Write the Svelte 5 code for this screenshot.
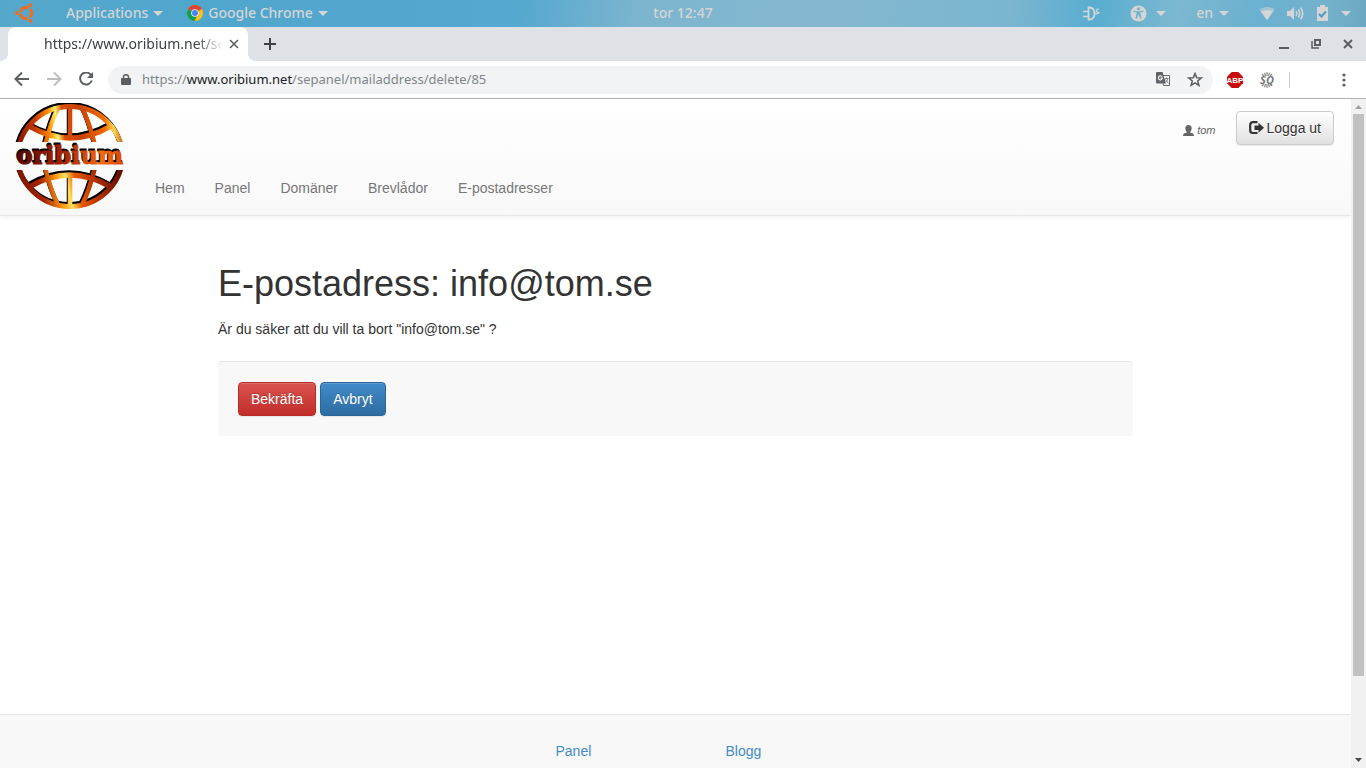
<script lang="ts">
  interface NavLink {
    label: string;
    href: string;
  }

  const address = 'info@tom.se';
  const user = 'tom';

  const navLinks: NavLink[] = [
    { label: 'Hem', href: '#hem' },
    { label: 'Panel', href: '#panel' },
    { label: 'Domäner', href: '#domaner' },
    { label: 'Brevlådor', href: '#brevlador' },
    { label: 'E-postadresser', href: '#e-postadresser' },
  ];

  const footerLinks: NavLink[] = [
    { label: 'Panel', href: '#panel' },
    { label: 'Blogg', href: '#blogg' },
  ];
</script>

{#snippet caret()}
  <svg class="caret" width="10" height="5" viewBox="0 0 10 5" aria-hidden="true"><path d="M0 0h10L5 5z" fill="currentColor" /></svg>
{/snippet}

<!-- Upper half of the globe; the lower half reuses it mirrored. -->
{#snippet globeHalf()}
  <path d="M2.500 53.500A52.500 51 0 0 1 107.500 53.500" stroke-width="5" />
  <path d="M14 22Q55 46 96 22" stroke-width="5.500" />
  <path d="M55 3V34" stroke-width="4.500" />
  <path d="M43 4Q35 20 30 42M67 4Q75 20 80 42" stroke-width="4.500" />
{/snippet}

<div class="desktop">
  <header class="topbar">
    <div class="topbar-left">
      <button class="sys ubuntu" aria-label="Ubuntu">
        <svg width="20" height="20" viewBox="0 0 20 20">
          <circle cx="11" cy="10" r="5.600" fill="none" stroke="#f96a16" stroke-width="3" stroke-dasharray="9.700 2.030" stroke-dashoffset="4.850" />
          <g fill="#f96a16">
            <circle cx="2" cy="10" r="1.900" />
            <circle cx="15.500" cy="2.200" r="1.900" />
            <circle cx="15.500" cy="17.800" r="1.900" />
          </g>
        </svg>
      </button>
      <button class="sys">Applications {@render caret()}</button>
      <button class="sys chrome">
        <svg width="16" height="16" viewBox="0 0 16 16" aria-hidden="true">
          <circle cx="8" cy="8" r="8" fill="#fbc116" />
          <path d="M8 8L1.070 4A8 8 0 0 1 14.930 4z" fill="#db4437" />
          <path d="M8 8L1.070 4A8 8 0 0 0 7.500 16L11 9z" fill="#0f9d58" />
          <circle cx="8" cy="8" r="3.800" fill="#f1f1f1" />
          <circle cx="8" cy="8" r="3" fill="#4285f4" />
        </svg>
        Google Chrome {@render caret()}
      </button>
    </div>
    <button class="sys clock">tor 12:47</button>
    <div class="topbar-right">
      <button class="sys" aria-label="Ström">
        <svg width="17" height="15" viewBox="0 0 17 15" fill="none" stroke="currentColor">
          <path d="M5.500 1.500H7Q11.500 2 11.500 7.500T7 13.500H5.500z" stroke-width="1.800" />
          <path d="M0 5.500H5M0 10.500H5M11 7.500h2" stroke-width="1.600" />
          <path d="M16 3.500Q13.500 2.500 13.500 4.500T15.500 6.500 13 8" stroke-width="1.200" />
        </svg>
      </button>
      <button class="sys" aria-label="Tillgänglighet">
        <svg width="17" height="17" viewBox="0 0 17 17">
          <circle cx="8.500" cy="8.500" r="8" fill="currentColor" />
          <g fill="#6fb2d0">
            <circle cx="8.500" cy="3.800" r="1.500" />
            <path d="M3.500 5.500L7 6.200H10L13.500 5.500V6.700L10.300 7.500 11.500 13.500H10.200L8.500 9.500 6.800 13.500H5.500L6.700 7.500 3.500 6.700z" />
          </g>
        </svg>
        {@render caret()}
      </button>
      <button class="sys lang">en {@render caret()}</button>
      <button class="sys status" aria-label="Systemstatus">
        <svg width="16" height="15" viewBox="0 0 16 15">
          <path d="M0 3.500Q8-1.500 16 3.500L8 14z" fill="currentColor" opacity=".5" />
          <path d="M2 5.500Q8 2.500 14 5.500L8 14z" fill="currentColor" />
        </svg>
        <svg width="17" height="15" viewBox="0 0 17 15" fill="none" stroke="currentColor" stroke-width="1.600">
          <path d="M0 5H3L7 1V14L3 10H0z" fill="currentColor" stroke="none" />
          <path d="M9 5.200Q10.500 7.500 9 9.800M11.300 3.500Q14 7.500 11.300 11.500M13.600 1.800Q17.800 7.500 13.600 13.200" />
        </svg>
        <svg width="13" height="16" viewBox="0 0 13 16">
          <path d="M1 2H4V0H9V2H12V16H1z" fill="currentColor" />
          <path d="M3 9L5.500 11.500 10 6.500" fill="none" stroke="#4f9cc4" stroke-width="2" />
        </svg>
        {@render caret()}
      </button>
    </div>
  </header>

  <div class="tabstrip">
    <div class="tab">
      <span class="tab-title">https://www.oribium.net/se</span>
      <button class="icon" aria-label="Stäng flik">
        <svg width="10" height="10" viewBox="0 0 10 10" stroke="#5a5d61" stroke-width="1.600"><path d="M1 1l8 8M9 1L1 9" /></svg>
      </button>
    </div>
    <button class="icon new-tab" aria-label="Ny flik">
      <svg width="12" height="12" viewBox="0 0 12 12" stroke="#3c4043" stroke-width="2"><path d="M6 0V12M0 6H12" /></svg>
    </button>
    <div class="window-buttons">
      <button class="icon" aria-label="Minimera">
        <svg width="10" height="12" viewBox="0 0 10 12"><path d="M0 9H10V11H0z" fill="#5a5d61" /></svg>
      </button>
      <button class="icon" aria-label="Återställ">
        <svg width="10" height="12" viewBox="0 0 10 12" fill="none" stroke="#5a5d61">
          <path d="M4 2H9V7H4z" stroke-width="2" />
          <path d="M1 3V10H8" stroke-width="1.500" />
        </svg>
      </button>
      <button class="icon" aria-label="Stäng">
        <svg width="10" height="10" viewBox="0 0 10 10" stroke="#5a5d61" stroke-width="2"><path d="M1 1l8 8M9 1L1 9" /></svg>
      </button>
    </div>
  </div>

  <div class="toolbar">
    <div class="history">
      <button class="icon" aria-label="Bakåt">
        <svg width="16" height="16" viewBox="0 0 16 16" fill="none" stroke="#5a5d61" stroke-width="2"><path d="M15 7H2.500M8 .5L1.500 7 8 13.500" /></svg>
      </button>
      <button class="icon" aria-label="Framåt" disabled>
        <svg width="16" height="16" viewBox="0 0 16 16" fill="none" stroke="#bbbcbe" stroke-width="2"><path d="M1 7H13.500M8 .5L14.500 7 8 13.500" /></svg>
      </button>
      <button class="icon" aria-label="Ladda om">
        <svg width="16" height="16" viewBox="0 0 16 16">
          <path d="M13.300 3.500A6 6 0 1 0 13.800 8.500" fill="none" stroke="#5a5d61" stroke-width="2" />
          <path d="M15 0V6H9z" fill="#5a5d61" />
        </svg>
      </button>
    </div>
    <div class="omnibox">
      <svg width="10" height="12" viewBox="0 0 10 12" aria-hidden="true">
        <path d="M1 4H9Q10 4 10 5V10Q10 11 9 11H1Q0 11 0 10V5Q0 4 1 4z" fill="#5a5d61" />
        <path d="M2.500 4.500V3Q2.500 .8 5 .8T7.500 3V4.500" fill="none" stroke="#5a5d61" stroke-width="1.400" />
      </svg>
      <span class="url">https://<b>www.oribium.net</b>/sepanel/mailaddress/delete/85</span>
      <button class="icon" aria-label="Översätt">
        <svg width="15" height="15" viewBox="0 0 15 15">
          <path d="M5.500 3.500H13.500V13.500H7.500z" fill="#f8f9fa" stroke="#6b6e72" />
          <path d="M1 0H6.500L10 11.500H1Q0 11.500 0 10.500V1Q0 0 1 0z" fill="#5f6368" />
          <path d="M6 4.500Q4.500 3 3 4.500T3.300 7.500 6.300 6H4.500" fill="none" stroke="#fff" stroke-width="1.100" />
          <path d="M8.500 6.500H12.500M10.500 5.500V6.500M11.800 6.500Q11 9.500 9.500 10.500M9.500 7.500L12.500 11.500" fill="none" stroke="#85888c" />
        </svg>
      </button>
      <button class="icon" aria-label="Bokmärk sidan">
        <svg width="16" height="16" viewBox="0 0 16 16" fill="none" stroke="#5a5d61" stroke-width="1.500">
          <path d="M8 1.500L9.700 5.700 14.200 6 10.700 8.900 11.900 13.300 8 10.900 4.100 13.300 5.300 8.900 1.800 6 6.300 5.700z" />
        </svg>
      </button>
    </div>
    <div class="extensions">
      <button class="icon" aria-label="Adblock Plus">
        <svg width="16" height="16" viewBox="0 0 16 16">
          <path d="M4.700 0H11.300L16 4.700V11.300L11.300 16H4.700L0 11.300V4.700z" fill="#c70d0d" />
          <text x="8" y="11" text-anchor="middle" class="abp">ABP</text>
        </svg>
      </button>
      <button class="icon" aria-label="SQ">
        <svg width="16" height="16" viewBox="0 0 16 16">
          <path d="M8 0V16M3 2L13 14M13 2L3 14M5.500 .8L10.500 15.200M10.500 .8L5.500 15.200" stroke="#8b8b8b" stroke-width="1.200" />
          <path d="M0 4H16V12H0z" fill="#fff" />
          <text x="8" y="12" text-anchor="middle" class="sq">SQ</text>
        </svg>
      </button>
      <span class="divider"></span>
      <button class="icon menu" aria-label="Meny">
        <svg width="4" height="14" viewBox="0 0 4 14" fill="#5a5d61">
          <circle cx="2" cy="2" r="1.600" /><circle cx="2" cy="7" r="1.600" /><circle cx="2" cy="12" r="1.600" />
        </svg>
      </button>
    </div>
  </div>

  <div class="viewport">
    <div class="page">
      <header class="navbar">
        <a class="brand" href="#hem" aria-label="Oribium">
          <svg width="110" height="107" viewBox="0 0 110 107">
            <defs>
              <clipPath id="half"><path d="M0 0H110V39H0z" /></clipPath>
              <linearGradient id="fire-top" gradientUnits="userSpaceOnUse" x1="0" y1="36" x2="110" y2="24">
                <stop offset="0" stop-color="#7c1200" />
                <stop offset=".2" stop-color="#c43a00" />
                <stop offset=".32" stop-color="#ff8a00" />
                <stop offset=".39" stop-color="#fff070" />
                <stop offset=".45" stop-color="#d84e08" />
                <stop offset=".6" stop-color="#c94108" />
                <stop offset=".82" stop-color="#f36a00" />
                <stop offset=".9" stop-color="#ffd850" />
                <stop offset="1" stop-color="#a82a00" />
              </linearGradient>
              <linearGradient id="fire-bottom" gradientUnits="userSpaceOnUse" x1="0" y1="10" x2="110" y2="36">
                <stop offset="0" stop-color="#6a0c00" />
                <stop offset=".25" stop-color="#a82500" />
                <stop offset=".4" stop-color="#ff9a10" />
                <stop offset=".48" stop-color="#ffe060" />
                <stop offset=".56" stop-color="#e85a00" />
                <stop offset=".75" stop-color="#a82c00" />
                <stop offset="1" stop-color="#580800" />
              </linearGradient>
              <linearGradient id="fire-text">
                <stop offset="0" stop-color="#580800" />
                <stop offset=".45" stop-color="#a82600" />
                <stop offset=".8" stop-color="#f26a10" />
                <stop offset="1" stop-color="#d84800" />
              </linearGradient>
            </defs>
            <g fill="none" clip-path="url(#half)">
              <g stroke="#000" transform="translate(-1 -1)">{@render globeHalf()}</g>
              <g stroke="url(#fire-top)" transform="translate(0 1)">{@render globeHalf()}</g>
            </g>
            <g fill="none" clip-path="url(#half)" transform="matrix(1 0 0 -1 0 106)">
              <g stroke="#000" transform="translate(-1 2)">{@render globeHalf()}</g>
              <g stroke="url(#fire-bottom)">{@render globeHalf()}</g>
            </g>
            <text x="54" y="59" text-anchor="middle" class="wordmark shade">oribium</text>
            <text x="55" y="61" text-anchor="middle" class="wordmark" fill="url(#fire-text)" stroke="url(#fire-text)">oribium</text>
          </svg>
        </a>
        <nav>
          {#each navLinks as link (link.label)}
            <a href={link.href}>{link.label}</a>
          {/each}
        </nav>
        <div class="account">
          <span class="user">
            <svg width="11" height="11" viewBox="0 0 11 11" aria-hidden="true">
              <path d="M5.500 0Q8.800 0 8.700 3.500 8.400 6 7.200 6.800V7.600L10 8.500Q11 9 11 11H0Q0 9 1 8.500L3.800 7.600V6.800Q2.600 6 2.300 3.500 2.200 0 5.500 0z" fill="#666" />
            </svg>
            <em>{user}</em>
          </span>
          <button class="btn btn-default">
            <svg width="15" height="14" viewBox="0 0 15 14" aria-hidden="true">
              <path d="M8.500 1.200H4Q1.200 1.200 1.200 4V9.500Q1.200 12 4 12H8.500" fill="none" stroke="#333" stroke-width="2.200" />
              <path d="M5.500 4.500H9.500V1.700L15 6.700 9.500 11.700V8.900H5.500z" fill="#333" />
            </svg>
            Logga ut
          </button>
        </div>
      </header>

      <main>
        <h1>E-postadress: {address}</h1>
        <p>Är du säker att du vill ta bort "{address}" ?</p>
        <form class="well" onsubmit={(e) => e.preventDefault()}>
          <button class="btn btn-danger" type="submit">Bekräfta</button>
          <button class="btn btn-primary" type="button">Avbryt</button>
        </form>
      </main>

      <footer>
        {#each footerLinks as link (link.label)}
          <a href={link.href}>{link.label}</a>
        {/each}
      </footer>
    </div>

    <div class="scrollbar" aria-hidden="true">
      <svg width="7" height="4" viewBox="0 0 7 4"><path d="M0 4L3.500 0 7 4z" fill="#a0a0a0" /></svg>
      <div class="track"><div class="thumb"></div></div>
      <svg width="7" height="4" viewBox="0 0 7 4"><path d="M0 0L3.500 4 7 0z" fill="#4a4a4a" /></svg>
    </div>
  </div>
</div>

<style>
  :global(body) {
    margin: 0;
  }

  .desktop {
    display: flex;
    flex-direction: column;
    height: 100vh;
    overflow: hidden;
    font-family: 'Liberation Sans', Arial, sans-serif;
    font-size: 14px;
    line-height: 20px;
    color: #333;
    background: #fff;
  }

  button {
    font: inherit;
  }

  svg {
    display: block;
    flex: none;
  }

  /* System bar */
  .topbar {
    display: grid;
    grid-template-columns: 1fr auto 1fr;
    align-items: center;
    height: 27px;
    box-sizing: border-box;
    flex: none;
    padding-bottom: 1px;
    background: linear-gradient(100deg, #56a8cb 0, #4fa6cd 15%, #55a8cf 38%, #7db5cf 47%, #84b8cf 60%, #7bb5d0 74%, #58add0 80%, #7cb8d0 86%, #6ab0d0 92%, #74b2cc 97%, #6ba7c0 100%);
    font-family: 'Noto Sans', sans-serif;
    font-weight: 500;
    color: #d5d5d5;
  }

  .topbar-left,
  .topbar-right {
    display: flex;
    align-items: center;
  }

  .topbar-left {
    gap: 24px;
    padding-left: 15px;
  }

  .topbar-right {
    justify-content: flex-end;
    gap: 30px;
    padding-right: 15px;
  }

  .sys {
    display: flex;
    align-items: center;
    gap: 5px;
    padding: 0;
    border: 0;
    background: none;
    color: inherit;
    white-space: nowrap;
  }

  .ubuntu {
    margin-right: 7px;
  }

  .topbar-right .sys {
    gap: 9px;
  }

  .topbar-right .lang {
    gap: 6px;
  }

  .topbar-right .status {
    gap: 12px;
  }

  /* Browser window */
  .icon {
    display: grid;
    place-items: center;
    padding: 0;
    border: 0;
    background: none;
  }

  .tabstrip {
    display: flex;
    align-items: center;
    height: 34px;
    flex: none;
    padding: 0 13px 0 8px;
    background: #dee1e6;
    font-family: 'Noto Sans', sans-serif;
  }

  .tab {
    position: relative;
    display: flex;
    align-items: center;
    align-self: stretch;
    gap: 4px;
    width: 193px;
    padding: 0 11px 0 36px;
    border-radius: 8px 8px 0 0;
    background: #fff;
  }

  /* Flared feet of the active tab */
  .tab::before,
  .tab::after {
    content: '';
    position: absolute;
    bottom: 0;
    width: 8px;
    height: 8px;
  }

  .tab::before {
    right: 100%;
    background: radial-gradient(circle at 0 0, transparent 8px, #fff 8px);
  }

  .tab::after {
    left: 100%;
    background: radial-gradient(circle at 100% 0, transparent 8px, #fff 8px);
  }

  .tab-title {
    flex: 1;
    white-space: nowrap;
    color: #3c4043;
    mask-image: linear-gradient(90deg, #000 84%, transparent 99%);
  }

  .new-tab {
    margin-left: 16px;
  }

  .window-buttons {
    display: flex;
    align-items: center;
    gap: 22px;
    margin-left: auto;
  }

  .toolbar {
    display: flex;
    align-items: center;
    height: 37px;
    flex: none;
    border-bottom: 1px solid #b3b3b5;
    background: #fff;
  }

  .history {
    display: flex;
    gap: 16px;
    padding: 0 14px;
  }

  .omnibox {
    display: flex;
    flex: 1;
    align-items: center;
    gap: 16px;
    height: 28px;
    padding: 0 10px 0 13px;
    border-radius: 14px;
    background: #f1f3f4;
    font-family: 'Noto Sans', sans-serif;
    font-size: 13px;
    color: #80868b;
  }

  .url {
    flex: 1;
    margin-left: -5px;
    padding-bottom: 2px;
    white-space: nowrap;
  }

  .url b {
    font-weight: 400;
    color: #202124;
  }

  .extensions {
    display: flex;
    align-items: center;
    gap: 16px;
    padding: 0 20px 0 14px;
  }

  .divider {
    width: 1px;
    height: 16px;
    margin-left: -2px;
    background: #c8cacc;
  }

  .menu {
    margin-left: 36px;
  }

  .abp {
    font: bold 8px 'Liberation Sans', sans-serif;
    fill: #fff;
  }

  .sq {
    font: italic bold 11px 'Open Sans', sans-serif;
    fill: #777;
  }

  .viewport {
    display: flex;
    flex: 1;
    min-height: 0;
  }

  .page {
    display: flex;
    flex: 1;
    flex-direction: column;
    min-width: 0;
  }

  .scrollbar {
    display: flex;
    flex-direction: column;
    align-items: center;
    gap: 5px;
    width: 15px;
    padding: 6px 0;
    box-sizing: border-box;
    background: #f1f1f1;
  }

  .track {
    flex: 1;
    width: 11px;
  }

  .thumb {
    height: 88%;
    background: #c1c1c1;
  }

  /* Site */
  .navbar {
    display: flex;
    align-items: flex-end;
    padding: 4px 17px 5px 15px;
    border-bottom: 1px solid #e7e7e7;
    background: linear-gradient(#fff, #f8f8f8);
    box-shadow: 0 1px 5px rgb(0 0 0 / 8%);
  }

  .wordmark {
    font: bold 24px 'DejaVu Serif', serif;
    stroke-width: 1px;
  }

  .shade {
    fill: #000;
    stroke: #000;
  }

  nav {
    display: flex;
    gap: 30px;
    margin-left: 30px;
    padding-bottom: 12px;
  }

  nav a {
    color: #777;
    text-decoration: none;
    text-shadow: 0 1px 0 rgb(255 255 255 / 25%);
  }

  .account {
    display: flex;
    align-items: center;
    align-self: flex-start;
    gap: 20px;
    margin-left: auto;
    padding-top: 8px;
  }

  .user {
    display: flex;
    align-items: center;
    gap: 3px;
    padding-top: 4px;
    font-size: 11px;
    color: #666;
  }

  .btn {
    display: inline-flex;
    align-items: center;
    gap: 3px;
    padding: 6px 12px;
    border: 1px solid;
    border-radius: 4px;
    box-shadow: inset 0 1px 0 rgb(255 255 255 / 15%), 0 1px 1px rgb(0 0 0 / 7%);
    cursor: pointer;
  }

  .btn-default {
    border-color: #ccc;
    background: linear-gradient(#fff, #e0e0e0);
    color: #333;
    text-shadow: 0 1px 0 #fff;
  }

  .btn-danger,
  .btn-primary {
    color: #fff;
    text-shadow: 0 -1px 0 rgb(0 0 0 / 20%);
  }

  .btn-danger {
    border-color: #b92c28;
    background: linear-gradient(#d9534f, #c12e2a);
  }

  .btn-primary {
    border-color: #2b669a;
    background: linear-gradient(#428bca, #2d6ca2);
  }

  main {
    flex: 1;
    width: 100%;
    max-width: 915px;
    margin: 0 auto;
    padding-top: 48px;
  }

  h1 {
    margin: 0 0 15px;
    font-size: 36px;
    font-weight: 500;
    line-height: 40px;
  }

  p {
    margin: 0 0 22px;
  }

  .well {
    display: flex;
    gap: 4px;
    padding: 20px;
    border-top: 1px solid #e5e5e5;
    border-radius: 4px;
    background: #f8f8f8;
  }

  footer {
    display: grid;
    grid-template-columns: 170px 70px;
    justify-content: center;
    padding: 26px 0 7px;
    border-top: 1px solid #e7e7e7;
    background: #f8f8f8;
  }

  footer a {
    color: #428bca;
    text-decoration: none;
  }
</style>
